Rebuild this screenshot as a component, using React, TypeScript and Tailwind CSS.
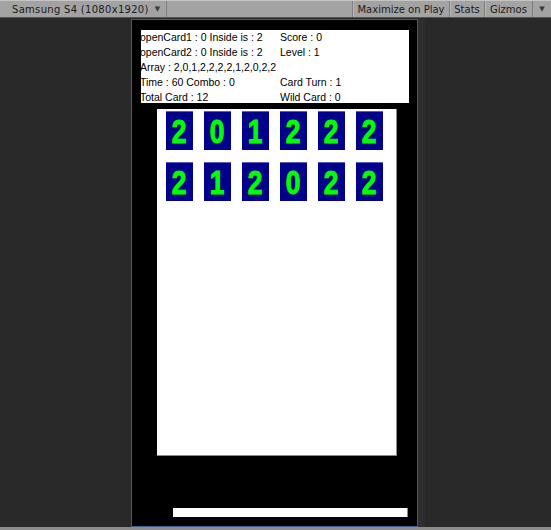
import React from 'react'

const rows = [
  [2, 0, 1, 2, 2, 2],
  [2, 1, 2, 0, 2, 2],
]

function ToolbarButton({ children, width }: { children?: React.ReactNode; width: string }) {
  return (
    <div className={`flex h-full items-center justify-center whitespace-nowrap border-l border-[#7d7d7d] shadow-[inset_1px_0_0_#b8b8b8] ${width}`}>
      {children}
    </div>
  )
}

function Card({ value }: { value: number }) {
  return (
    <div className="flex h-[39px] w-[27px] items-center justify-center overflow-hidden border-t border-[#5a5ac8] bg-[#00008b]">
      <span
        className="inline-block scale-x-[0.8] text-[33px] font-bold leading-none text-[#00ff00] [-webkit-text-stroke:1px_#00ff00]"
        style={{ fontFamily: '"Liberation Sans", Arial, sans-serif' }}
      >
        {value}
      </span>
    </div>
  )
}

export default function App() {
  return (
    <div className="flex h-[530px] w-[551px] flex-col overflow-hidden bg-[#292929]">
      {/* editor toolbar */}
      <div
        className="flex h-[18px] shrink-0 items-center border-b border-[#555] border-t border-t-[#c4c4c4] bg-[#a3a3a3] text-[10px] text-[#1a1a1a]"
        style={{ fontFamily: '"DejaVu Sans", sans-serif' }}
      >
        <div className="flex h-full w-[166px] items-center whitespace-nowrap pl-[12px]">
          <span className="tracking-[0.3px]">Samsung S4 (1080x1920)</span>
          <span className="ml-[6px] text-[7px] text-[#3a3a3a]">▼</span>
        </div>
        <div className="h-full flex-1 border-l border-[#7d7d7d]" />
        <ToolbarButton width="w-[97px]">Maximize on Play</ToolbarButton>
        <ToolbarButton width="w-[35px]">Stats</ToolbarButton>
        <ToolbarButton width="w-[48px]">Gizmos</ToolbarButton>
        <div className="flex h-full w-[19px] items-center justify-center border-l border-[#7d7d7d] text-[7px] text-[#3a3a3a]">▼</div>
      </div>

      {/* game view */}
      <div className="flex flex-1 pt-[1px]">
        <div className="w-[131px] shrink-0" />
        <div className="flex h-[508px] w-[287px] shrink-0 flex-col border border-[#3d5d92] bg-black">
          <div
            className="ml-[9px] mt-[10px] h-[73px] w-[268px] bg-white text-[10.5px] leading-[15px] text-black"
            style={{ fontFamily: '"Liberation Sans", Arial, sans-serif' }}
          >
            <div className="-ml-[1px] grid grid-cols-[140px_1fr]">
              <span>openCard1 : 0 Inside is : 2</span>
              <span>Score : 0</span>
              <span>openCard2 : 0 Inside is : 2</span>
              <span>Level : 1</span>
              <span className="col-span-2">Array : 2,0,1,2,2,2,2,1,2,0,2,2</span>
              <span>Time : 60 Combo : 0</span>
              <span>Card Turn : 1</span>
              <span>Total Card : 12</span>
              <span>Wild Card : 0</span>
            </div>
          </div>

          <div className="ml-[25px] mt-[6px] h-[347px] w-[240px] border-b border-r border-[#8a8a8a] bg-white pl-[9px] pt-[2px]">
            <div className="flex flex-col gap-[12px]">
              {rows.map((row, i) => (
                <div key={i} className="flex gap-[11px]">
                  {row.map((v, j) => (
                    <Card key={j} value={v} />
                  ))}
                </div>
              ))}
            </div>
          </div>

          <div className="ml-[41px] mt-[52px] h-[9px] w-[235px] border-r border-[#8a8a8a] bg-white" />
        </div>
        <div className="flex-1 border-l-[7px] border-[#2e2e2e]" />
      </div>
      <div className="h-[3px] shrink-0 bg-[#8c8c8c]" />
    </div>
  )
}
